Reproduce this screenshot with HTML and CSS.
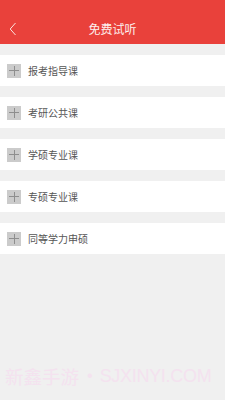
FILE: index.html
```html
<!DOCTYPE html>
<html lang="zh">
<head>
<meta charset="utf-8">
<link rel="stylesheet" href="styles.css">
</head>
<body>
<div class="header">
  <svg class="back" width="8" height="14" viewBox="0 0 8 14"><path d="M6.5 1 L1.2 7 L6.5 13" fill="none" stroke="#fbe3df" stroke-width="1"/></svg>
  <div class="title">免费试听</div>
</div>
<div class="list">
  <div class="row"><span class="plus"></span><span class="label">报考指导课</span></div>
  <div class="row"><span class="plus"></span><span class="label">考研公共课</span></div>
  <div class="row"><span class="plus"></span><span class="label">学硕专业课</span></div>
  <div class="row"><span class="plus"></span><span class="label">专硕专业课</span></div>
  <div class="row"><span class="plus"></span><span class="label">同等学力申硕</span></div>
</div>
<div class="watermark"><span class="wm-cn">新鑫手游</span><span class="wm-dot">•</span><span class="wm-en">SJXINYI.COM</span></div>
</body>
</html>
```
FILE: styles.css
```css
html, body { margin: 0; padding: 0; }
body {
  width: 225px;
  height: 400px;
  background: #f0f0f0;
  font-family: "Noto Sans CJK SC", "Noto Sans", sans-serif;
  position: relative;
  overflow: hidden;
}
.header {
  height: 44px;
  background: #e9413b;
  box-sizing: border-box;
  padding-top: 14px;
  display: flex;
  align-items: center;
  justify-content: center;
  position: relative;
}
.header .back {
  position: absolute;
  left: 9px;
  top: 22px;
}
.title {
  color: #fdf0ee;
  font-size: 12px;
  line-height: 30px;
}
.list {
  display: flex;
  flex-direction: column;
  gap: 11px;
  padding-top: 11px;
}
.row {
  height: 31px;
  background: #ffffff;
  display: flex;
  align-items: center;
  padding-left: 7px;
}
.plus {
  width: 14px;
  height: 14px;
  background: #cbcbcb;
  position: relative;
  flex: none;
}
.plus::before, .plus::after {
  content: "";
  position: absolute;
  background: #8e8e8e;
}
.plus::before { left: 2px; right: 2px; top: 6.5px; height: 1px; }
.plus::after { top: 2px; bottom: 2px; left: 6.5px; width: 1px; }
.label {
  margin-left: 7px;
  font-size: 10px;
  color: #555555;
}
.watermark {
  position: absolute;
  left: 5px;
  top: 363px;
  display: flex;
  align-items: center;
  color: #f4e2ef;
  white-space: nowrap;
  font-family: "Liberation Sans", "Noto Sans CJK SC", sans-serif;
}
.wm-cn { font-family: "Noto Sans CJK SC", sans-serif; font-size: 18.5px; }
.wm-dot { font-size: 16px; margin: 0 7px 0 8px; }
.wm-en { font-size: 18px; letter-spacing: -0.3px; }
```
